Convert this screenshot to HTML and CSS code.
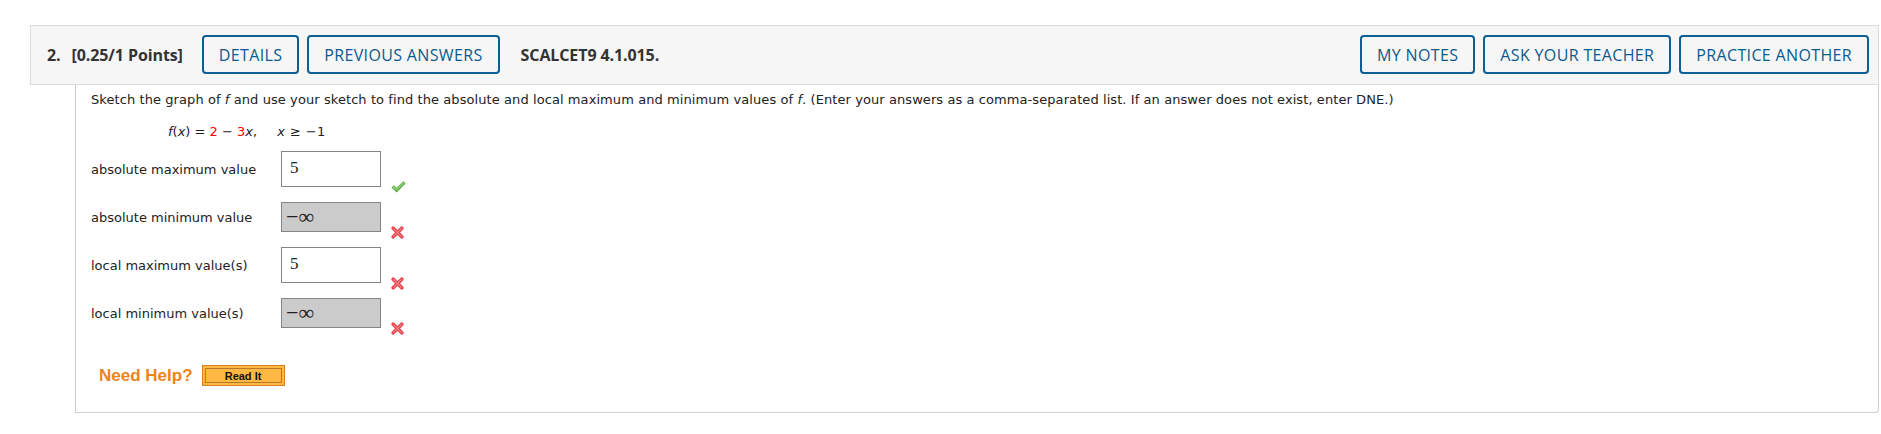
FILE: index.html
```html
<!DOCTYPE html>
<html lang="en">
<head>
    <meta charset="UTF-8">
    <title>Question 2 - SCALCET9 4.1.015</title>
    <link rel="stylesheet" href="styles.css">
</head>
<body>
    <div class="question">
        <div class="q-header">
            <span class="q-number">2.</span>
            <span class="q-points">[0.25/1 Points]</span>
            <button class="hdr-btn">DETAILS</button>
            <button class="hdr-btn">PREVIOUS ANSWERS</button>
            <span class="q-code">SCALCET9 4.1.015.</span>
            <div class="hdr-right">
                <button class="hdr-btn">MY NOTES</button>
                <button class="hdr-btn">ASK YOUR TEACHER</button>
                <button class="hdr-btn">PRACTICE ANOTHER</button>
            </div>
        </div>

        <div class="q-body">
            <p class="prompt">Sketch the graph of <i>f</i> and use your sketch to find the absolute and local maximum and minimum values of <i>f</i>. (Enter your answers as a comma-separated list. If an answer does not exist, enter DNE.)</p>

            <div class="formula">
                <i>f</i>(<i>x</i>) = <span class="red">2</span> &minus; <span class="red">3</span><i>x</i>,
                <span class="domain"><i>x</i> &ge; &minus;1</span>
            </div>

            <div class="answers">
                <div class="answer-row">
                    <span class="answer-label">absolute maximum value</span>
                    <span class="answer-box">5</span>
                    <svg class="mark mark-ok" width="15" height="12" viewBox="0 0 15 12">
                        <path d="M0.5 6.5 L3 4.2 L5.6 6.8 L12.4 0.3 L14.6 2.6 L5.6 11.4 Z" fill="#5aaa46"/>
                        <path d="M1.6 6.5 L3 5.2 L5.6 7.8 L12.4 1.3 L13.4 2.3 L5.6 9.6 Z" fill="#8fd177"/>
                    </svg>
                </div>
                <div class="answer-row">
                    <span class="answer-label">absolute minimum value</span>
                    <span class="answer-box answer-box-done">&minus;&infin;</span>
                    <svg class="mark mark-bad" width="13" height="13" viewBox="0 0 13 13">
                        <path d="M2.2 2.2 L10.8 10.8 M10.8 2.2 L2.2 10.8" stroke="#e8434b" stroke-width="3.6" stroke-linecap="round"/>
                        <path d="M2.6 2.6 L10.4 10.4 M10.4 2.6 L2.6 10.4" stroke="#f4838a" stroke-width="1.2" stroke-linecap="round"/>
                    </svg>
                </div>
                <div class="answer-row">
                    <span class="answer-label">local maximum value(s)</span>
                    <span class="answer-box">5</span>
                    <svg class="mark mark-bad" width="13" height="13" viewBox="0 0 13 13">
                        <path d="M2.2 2.2 L10.8 10.8 M10.8 2.2 L2.2 10.8" stroke="#e8434b" stroke-width="3.6" stroke-linecap="round"/>
                        <path d="M2.6 2.6 L10.4 10.4 M10.4 2.6 L2.6 10.4" stroke="#f4838a" stroke-width="1.2" stroke-linecap="round"/>
                    </svg>
                </div>
                <div class="answer-row">
                    <span class="answer-label">local minimum value(s)</span>
                    <span class="answer-box answer-box-done">&minus;&infin;</span>
                    <svg class="mark mark-bad" width="13" height="13" viewBox="0 0 13 13">
                        <path d="M2.2 2.2 L10.8 10.8 M10.8 2.2 L2.2 10.8" stroke="#e8434b" stroke-width="3.6" stroke-linecap="round"/>
                        <path d="M2.6 2.6 L10.4 10.4 M10.4 2.6 L2.6 10.4" stroke="#f4838a" stroke-width="1.2" stroke-linecap="round"/>
                    </svg>
                </div>
            </div>

            <div class="help">
                <span class="help-title">Need Help?</span>
                <button class="read-btn">Read It</button>
            </div>
        </div>
    </div>
</body>
</html>
```

FILE: styles.css
```css
body {
    margin: 0;
    padding: 25px 2px 0 30px;
    background-color: #fff;
    font-family: 'DejaVu Sans', Verdana, sans-serif;
    font-size: 13px;
    color: #222;
}

.q-header {
    display: flex;
    align-items: center;
    height: 39px;
    padding: 9px 9px 10px 16px;
    background-color: #f6f6f6;
    border: 1px solid #dcdcdc;
    font-family: 'Open Sans', sans-serif;
    font-size: 16px;
    color: #333;
}

.q-number,
.q-points,
.q-code {
    font-weight: 700;
    letter-spacing: -0.1px;
}

.q-number {
    margin-right: 11px;
}

.q-points {
    margin-right: 19px;
}

.q-code {
    margin-left: 13px;
}

.hdr-btn {
    height: 39px;
    padding: 0 15px;
    margin-right: 8px;
    background-color: transparent;
    border: 2px solid #0b5f96;
    border-radius: 4px;
    font-family: 'Open Sans', sans-serif;
    font-size: 16px;
    letter-spacing: 0.35px;
    color: #0b5a8e;
    cursor: pointer;
}

.hdr-right {
    display: flex;
    margin-left: auto;
}

.hdr-right .hdr-btn:last-child {
    margin-right: 0;
}

.q-body {
    margin-left: 45px;
    padding: 7px 15px 26px;
    border: 1px solid #cfcfcf;
    border-top: none;
    border-radius: 0 0 4px 0;
}

.prompt {
    margin: 0;
    line-height: 16px;
    letter-spacing: 0.08px;
}

.formula {
    margin: 16px 0 0 77px;
    line-height: 16px;
}

.red {
    color: #f00;
}

.domain {
    margin-left: 16px;
    letter-spacing: 0.4px;
}

.answers {
    display: flex;
    flex-direction: column;
    gap: 15px;
    margin-top: 11px;
}

.answer-row {
    display: flex;
    align-items: center;
}

.answer-label {
    width: 190px;
}

.answer-box {
    display: flex;
    align-items: center;
    box-sizing: border-box;
    width: 100px;
    height: 36px;
    padding: 0 8px 2px;
    background-color: #fff;
    border: 1px solid #858585;
    font-family: 'Liberation Serif', serif;
    font-size: 17px;
    line-height: 16px;
}

.answer-box-done {
    height: 30px;
    padding: 0 4px 1px;
    background-color: #cbcbcb;
    font-size: 22px;
}

.mark {
    align-self: flex-end;
    margin-left: 10px;
}

.mark-ok {
    margin-bottom: -6px;
}

.mark-bad {
    margin-bottom: -7px;
}

.help {
    display: flex;
    align-items: center;
    margin: 37px 0 0 8px;
}

.help-title {
    margin-right: 9px;
    font-family: 'Liberation Sans', Arial, sans-serif;
    font-size: 17px;
    font-weight: bold;
    color: #ee8418;
}

.read-btn {
    width: 83px;
    height: 21px;
    padding: 0;
    background-color: #ffb942;
    border: 1px solid #d9801c;
    box-shadow: inset 0 0 0 2px #ffb942, inset 0 0 0 3px #b9782c;
    font-family: 'Liberation Sans', Arial, sans-serif;
    font-size: 11px;
    font-weight: bold;
    color: #111;
    cursor: pointer;
}
```
